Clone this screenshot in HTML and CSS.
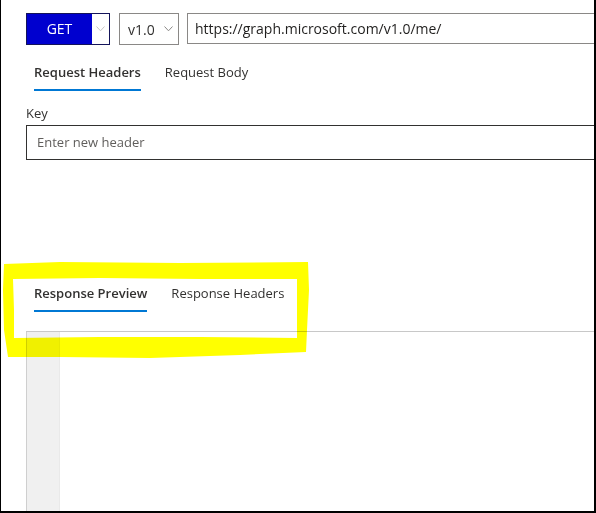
FILE: index.html
```html
<!DOCTYPE html>
<html lang="en">
<head>
<meta charset="utf-8">
<title>Graph Explorer</title>
<link rel="stylesheet" href="styles.css">
</head>
<body>
<div class="frame">
  <div class="app">
    <div class="request-bar">
      <div class="method">
        <span class="method-label">GET</span>
        <span class="method-caret"><svg width="9" height="6" viewBox="0 0 9 6"><polyline points="0.5,0.5 4.5,4.8 8.5,0.5" fill="none" stroke="#c8c6c4" stroke-width="1"/></svg></span>
      </div>
      <div class="version">
        <span class="version-label">v1.0</span>
        <svg class="version-caret" width="9" height="6" viewBox="0 0 9 6"><polyline points="0.5,0.5 4.5,4.8 8.5,0.5" fill="none" stroke="#8a8886" stroke-width="1"/></svg>
      </div>
      <div class="url">https://graph.microsoft.com/v1.0/me/</div>
    </div>
    <div class="tabs request-tabs">
      <span class="tab active">Request Headers</span>
      <span class="tab">Request Body</span>
    </div>
    <div class="field-label">Key</div>
    <div class="text-input"><span class="placeholder">Enter new header</span></div>
    <div class="tabs response-tabs">
      <span class="tab active">Response Preview</span>
      <span class="tab">Response Headers</span>
    </div>
    <div class="editor">
      <div class="gutter"></div>
      <div class="editor-body"></div>
    </div>
  </div>
  <svg class="highlight" width="596" height="513" viewBox="0 0 596 513">
    <path fill-rule="evenodd" fill="#ffff00" d="M4,264 L60,262 L180,263 L308,262 L309,290 L307,330 L306,352 L240,355 L150,358 L60,357 L8,357 L4,330 L3,290 Z M13,279 L100,278 L200,279 L297,279 L297,310 L297,338 L200,337 L100,337 L14,338 L14,310 Z"/>
  </svg>
</div>
</body>
</html>
```

FILE: styles.css
```css
html, body {
  margin: 0;
  padding: 0;
  background: #ffffff;
}

body {
  font-family: "Open Sans", "Noto Sans", "Liberation Sans", sans-serif;
  font-size: 13px;
  color: #323130;
  overflow: hidden;
}

.frame {
  position: relative;
  width: 596px;
  height: 513px;
  box-sizing: border-box;
  border-left: 1px solid #000;
  border-right: 2px solid #000;
  border-bottom: 2px solid #000;
  overflow: hidden;
}

.app {
  display: flex;
  flex-direction: column;
  height: 100%;
  box-sizing: border-box;
  padding: 13px 0 0 25px;
}

.request-bar {
  display: flex;
  align-items: flex-start;
  height: 32px;
}

.method {
  display: flex;
  width: 84px;
  height: 32px;
  box-sizing: border-box;
  border: 1px solid #14145a;
  flex-shrink: 0;
}

.method-label {
  width: 65px;
  background: #0000cf;
  color: #ffffff;
  font-size: 14px;
  line-height: 30px;
  text-align: center;
}

.method-caret {
  flex: 1;
  display: flex;
  align-items: center;
  justify-content: center;
  background: #ffffff;
}

.version {
  display: flex;
  align-items: center;
  justify-content: space-between;
  margin-left: 9px;
  width: 60px;
  height: 32px;
  box-sizing: border-box;
  border: 1px solid #8a8886;
  padding: 0 5px 0 8px;
  flex-shrink: 0;
  font-size: 14px;
}

.url {
  margin-left: 8px;
  width: 520px;
  height: 31px;
  box-sizing: border-box;
  border: 1px solid #8a8886;
  padding-left: 7px;
  line-height: 29px;
  font-size: 14px;
  color: #201f1e;
  flex-shrink: 0;
  white-space: nowrap;
}

.tabs {
  display: flex;
  gap: 24px;
  padding-left: 8px;
}

.request-tabs {
  margin-top: 17px;
}

.response-tabs {
  margin-top: 123px;
}

.tab {
  line-height: 20px;
  padding-bottom: 7px;
  border-bottom: 2px solid transparent;
  font-size: 13px;
  color: #323130;
}

.tab.active {
  font-weight: 600;
  border-bottom-color: #0078d4;
}

.field-label {
  margin-top: 12px;
  line-height: 20px;
  font-size: 13px;
}

.text-input {
  margin-top: 2px;
  width: 600px;
  height: 35px;
  box-sizing: border-box;
  border: 1px solid #323130;
  padding-left: 10px;
  line-height: 33px;
  flex-shrink: 0;
}

.placeholder {
  color: #605e5c;
  font-size: 13px;
}

.editor {
  margin-top: 19px;
  flex: 1;
  display: flex;
  width: 620px;
  border-top: 1px solid #c8c8c8;
}

.gutter {
  width: 32px;
  background: #f0f0f0;
  border-left: 1px solid #cfcfcf;
  border-right: 1px solid #e9e9e9;
}

.editor-body {
  flex: 1;
  background: #ffffff;
}

.highlight {
  position: absolute;
  left: -1px;
  top: 0;
  pointer-events: none;
  mix-blend-mode: multiply;
}
```
